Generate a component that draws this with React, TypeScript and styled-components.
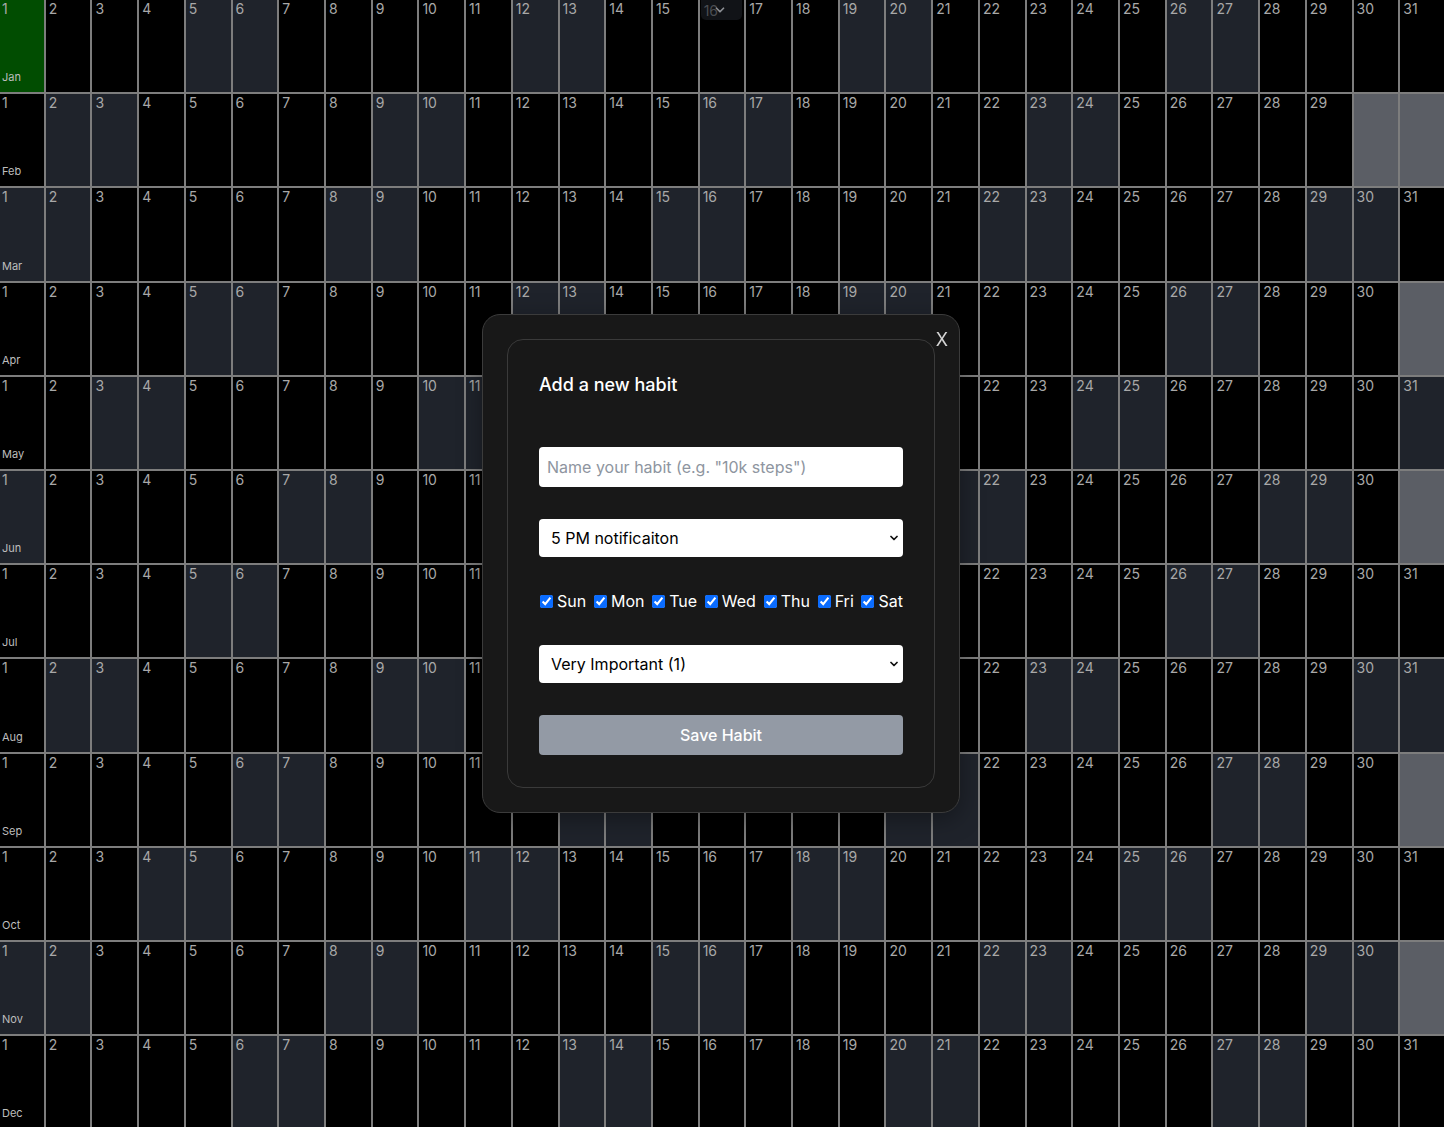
import { useState } from "react";
import styled, { createGlobalStyle } from "styled-components";
import { ChevronDown } from "lucide-react";

const GlobalStyle = createGlobalStyle`
  html, body {
    margin: 0;
    padding: 0;
    background: #000000;
    font-family: Inter, "Noto Sans", "Liberation Sans", sans-serif;
    overflow: hidden;
  }
  * {
    box-sizing: border-box;
  }
`;

const YEAR = 2024;
const MONTHS = ["Jan", "Feb", "Mar", "Apr", "May", "Jun", "Jul", "Aug", "Sep", "Oct", "Nov", "Dec"];
const WEEKDAYS = ["Sun", "Mon", "Tue", "Wed", "Thu", "Fri", "Sat"];

type CellKind = "normal" | "weekend" | "invalid" | "done";

const cellBackground: Record<CellKind, string> = {
  normal: "#000000",
  weekend: "#1f232b",
  invalid: "#5b5e65",
  done: "#014d01",
};

const CalendarGrid = styled.div`
  display: grid;
  grid-template-columns: repeat(31, 1fr);
  grid-auto-rows: 94.2px;
  width: calc(100vw + 4px);
  margin-left: -1px;
`;

const DayCell = styled.div<{ $kind: CellKind }>`
  position: relative;
  display: flex;
  flex-direction: column;
  justify-content: space-between;
  padding: 0 3px 8px 3px;
  background: ${(p) => cellBackground[p.$kind]};
  border-right: 2px solid #7d7d7d;
  border-bottom: 2px solid #7d7d7d;
`;

const DayNumber = styled.span`
  font-size: 14px;
  line-height: 18px;
  color: #a8a8a8;
`;

const MonthLabel = styled.span`
  font-size: 11px;
  line-height: 13px;
  color: #bdbdbd;
`;

const DayPicker = styled.div`
  position: absolute;
  top: 0;
  left: 1px;
  width: 41px;
  height: 20px;
  display: flex;
  align-items: center;
  padding-left: 3px;
  background: #111317;
  border-radius: 0 0 5px 5px;
  font-size: 14px;
  color: #4a4d52;

  svg {
    margin-left: -5px;
    color: #8c8f94;
  }
`;

const Overlay = styled.div`
  position: fixed;
  inset: 0;
  display: flex;
  align-items: center;
  justify-content: center;
  padding-right: 2px;
`;

const ModalCard = styled.div`
  position: relative;
  padding: 24px;
  background: #181818;
  border: 1px solid #3b3b3b;
  border-radius: 18px;
  box-shadow: 0 6px 24px rgba(0, 0, 0, 0.35);
`;

const CloseButton = styled.button`
  position: absolute;
  top: 14px;
  right: 11px;
  padding: 0;
  background: none;
  border: none;
  color: #d4d4d4;
  font-family: inherit;
  font-size: 18px;
  line-height: 22px;
  cursor: pointer;
`;

const ModalInner = styled.div`
  padding: 32px 31px;
  border: 1px solid #3a3a3a;
  border-radius: 16px;
  background: #181818;
`;

const Title = styled.h2`
  margin: 2px 0 51px 0;
  font-size: 18px;
  line-height: 22px;
  font-weight: 500;
  color: #ffffff;
`;

const Form = styled.form`
  display: flex;
  flex-direction: column;
  gap: 32px;
  width: 364px;
`;

const TextInput = styled.input`
  height: 40px;
  padding: 0 8px;
  border: none;
  border-radius: 4px;
  background: #ffffff;
  font-family: inherit;
  font-size: 16px;
  color: #000000;
  outline: none;

  &::placeholder {
    color: #8e95a0;
  }
`;

const SelectWrap = styled.div`
  position: relative;
  height: 38px;

  svg {
    position: absolute;
    right: 3px;
    top: 13px;
    pointer-events: none;
    color: #111111;
  }
`;

const Select = styled.select`
  appearance: none;
  width: 100%;
  height: 100%;
  padding: 0 12px;
  border: none;
  border-radius: 4px;
  background: #ffffff;
  font-family: inherit;
  font-size: 16px;
  color: #000000;
  outline: none;
`;

const DaysRow = styled.div`
  display: flex;
  justify-content: space-between;
  align-items: center;
  height: 24px;
`;

const DayOption = styled.label`
  display: flex;
  align-items: center;
  gap: 4px;
  font-size: 16px;
  color: #ffffff;
  cursor: pointer;
`;

const Checkbox = styled.input`
  width: 13px;
  height: 13px;
  margin: 0 0 0 1px;
  accent-color: #0a6cff;
`;

const SaveButton = styled.button`
  height: 40px;
  border: none;
  border-radius: 4px;
  background: #939aa5;
  color: #ffffff;
  font-family: inherit;
  font-size: 16px;
  font-weight: 500;
  cursor: pointer;
`;

function cellKind(month: number, day: number): CellKind {
  const daysInMonth = new Date(YEAR, month + 1, 0).getDate();
  if (day > daysInMonth) return "invalid";
  if (month === 0 && day === 1) return "done";
  const weekday = new Date(YEAR, month, day + 1).getDay();
  return weekday === 0 || weekday === 6 ? "weekend" : "normal";
}

export default function App() {
  const [days, setDays] = useState<boolean[]>(WEEKDAYS.map(() => true));
  const [name, setName] = useState("");

  return (
    <>
      <GlobalStyle />
      <CalendarGrid>
        {MONTHS.map((month, m) =>
          Array.from({ length: 31 }, (_, i) => {
            const day = i + 1;
            const kind = cellKind(m, day);
            return (
              <DayCell key={`${month}-${day}`} $kind={kind}>
                {kind !== "invalid" && <DayNumber>{day}</DayNumber>}
                {day === 1 && <MonthLabel>{month}</MonthLabel>}
                {m === 0 && day === 16 && (
                  <DayPicker>
                    16
                    <ChevronDown size={14} strokeWidth={3} />
                  </DayPicker>
                )}
              </DayCell>
            );
          })
        )}
      </CalendarGrid>

      <Overlay>
        <ModalCard>
          <CloseButton type="button">X</CloseButton>
          <ModalInner>
            <Title>Add a new habit</Title>
            <Form onSubmit={(e) => e.preventDefault()}>
              <TextInput
                value={name}
                onChange={(e) => setName(e.target.value)}
                placeholder={'Name your habit (e.g. "10k steps")'}
              />
              <SelectWrap>
                <Select defaultValue="17">
                  <option value="17">5 PM notificaiton</option>
                  <option value="9">9 AM notification</option>
                  <option value="none">No notification</option>
                </Select>
                <ChevronDown size={12} strokeWidth={3.5} />
              </SelectWrap>
              <DaysRow>
                {WEEKDAYS.map((d, i) => (
                  <DayOption key={d}>
                    <Checkbox
                      type="checkbox"
                      checked={days[i]}
                      onChange={() =>
                        setDays((prev) => prev.map((v, j) => (j === i ? !v : v)))
                      }
                    />
                    {d}
                  </DayOption>
                ))}
              </DaysRow>
              <SelectWrap>
                <Select defaultValue="1">
                  <option value="1">Very Important (1)</option>
                  <option value="2">Important (2)</option>
                  <option value="3">Nice to have (3)</option>
                </Select>
                <ChevronDown size={12} strokeWidth={3.5} />
              </SelectWrap>
              <SaveButton type="submit">Save Habit</SaveButton>
            </Form>
          </ModalInner>
        </ModalCard>
      </Overlay>
    </>
  );
}
